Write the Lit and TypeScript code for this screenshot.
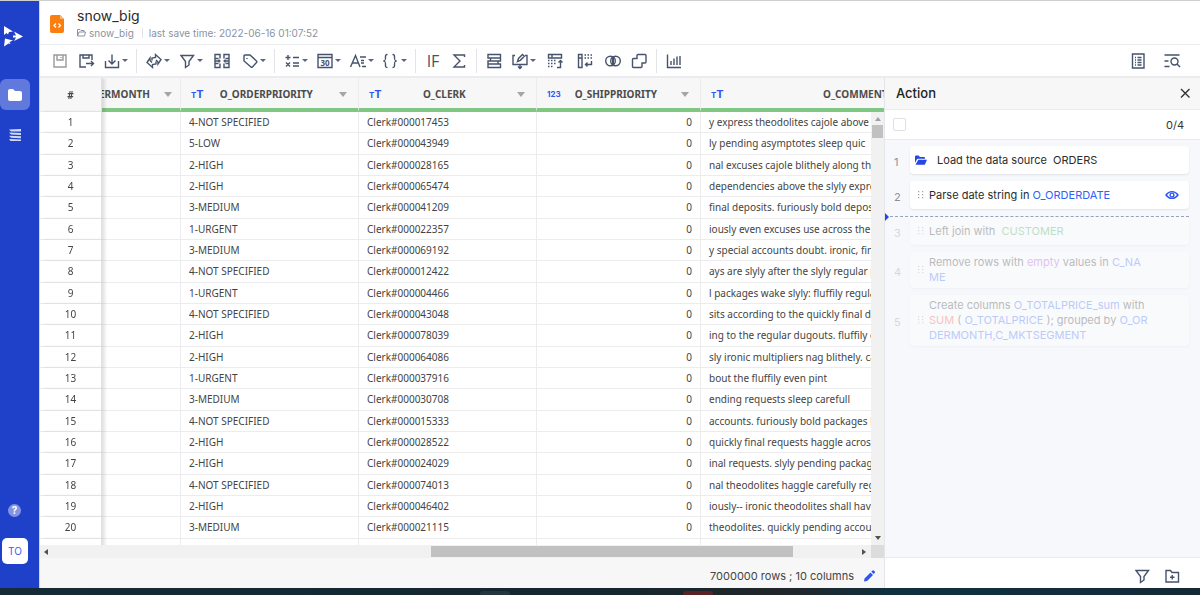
import { LitElement, html, svg, css, nothing } from "lit";
import { customElement, property } from "lit/decorators.js";
import { classMap } from "lit/directives/class-map.js";

const ICONS: Record<string, any> = {
  save: svg`<path d="M3 3h12v12H3z M6 3v5h6V3 M10 5v1"/>`,
  saveAs: svg`<path d="M15 8V3H3v12h6 M6 3v3h6V3 M9 11.500h7 M14 9l2.500 2.500L14 14"/>`,
  download: svg`<path d="M2.500 9v6.500h13V9 M9 2.500v9 M5.500 8.500L9 12l3.500-3.500"/>`,
  convert: svg`<path d="M7 8.500V6l3.500-.5V2.500L16 7.500 13 12v-2 M11 9.500V12l-3.500.5v3L2 10.500 5 6v2.500 M5 8.500l2 2 M13 10l-2-2"/>`,
  filter: svg`<path d="M3 3.500h12.500L11 9.500v3.500l-3.500 2.500v-6z"/>`,
  columns: svg`<path d="M7 6.500V2.500H2v13h5v-4 M2 6.500h3.500 M2 11.500h3.500 M11 6.500V2.500h5v13h-5v-4 M16 6.500h-3.500 M16 11.500h-3.500 M2 9h5.500 M10.500 9H16 M6 7.500v3 M12 7.500v3"/>`,
  tag: svg`<path d="M3 4q0-1 1-1h5l6.500 6q.8.700 0 1.500L11.500 15q-.8.700-1.500 0L3 9z M6 6v1"/>`,
  calc: svg`<path d="M2.500 5.500h5 M5 3v5 M10 5.500h6 M3 10.500l4 4 M7 10.500l-4 4 M10 11h6 M10 14h6"/>`,
  calendar: svg`<path d="M2 2.500h14v13H2z M2 5.500h14"/><text x="9" y="14" font-size="8" font-weight="700" text-anchor="middle">30</text>`,
  format: svg`<path d="M1.500 15L6.500 3.500 11 15 M3.500 11h6 M11 5h6 M12 8.500h3 M12 11h3 M13 14.500h4"/>`,
  braces: svg`<path d="M5.500 2.500c-2.500 0-2 1.500-2 3.500s0 2.500-2 3c2 .5 2 1 2 3s-.5 3.500 2 3.500 M10.500 2.500c2.500 0 2 1.500 2 3.500s0 2.500 2 3c-2 .5-2 1-2 3s.5 3.500-2 3.500"/>`,
  sigma: svg`<path d="M14.500 5V3H4l6 6-6 6h10.500v-2"/>`,
  union: svg`<path d="M3 2.500h12.500v3.500H3z M3 12h12.500v3.500H3z M5.500 6v3h7.500v3 M15.500 6v3h-2.500 M3 12V9h2.500"/>`,
  edit: svg`<path d="M4 3.500H2v9h14v-9h-2 M9 12.500V16 M7 14.500l2 2 2-2 M6.500 9.500l1-3 4-4 1.800 1.800-4 4z"/>`,
  pivot: svg`<path d="M2.500 2.500h13v3.500h-13z M6 2.500V6 M11 15.500h3.500V8.500 M12.500 10.500l2-2 2 2"/><path stroke-dasharray="1.500 1.500" d="M2 8.500h8 M2 11.500h8 M2 14.500h6"/>`,
  unpivot: svg`<path d="M2.500 2.500H6v13H2.500z M2.500 6H6 M15.500 9v3.500H9.500 M11.500 10.500l-2 2 2 2"/><path stroke-dasharray="1.500 1.500" d="M8.500 3h8 M8.500 6h8"/>`,
  join: svg`<circle cx="6.500" cy="9" r="4.800"/><circle cx="11.500" cy="9" r="4.800"/><path d="M9 5v8" stroke-width="2"/>`,
  copy: svg`<path d="M7 6.500v-3q0-1 1-1h7q1 0 1 1v6.500q0 1-1 1h-3v3.500q0 1-1 1H3.500q-1 0-1-1V7.500q0-1 1-1z"/>`,
  chart: svg`<path d="M2.500 2.500v13H16 M6 9v4 M9 6.500V13 M12 4.500V13 M15 4v9"/>`,
  report: svg`<path d="M3.500 2h11.500v14H3.500z M6 5.500h1 M8.500 5.500h4 M6 8h1 M8.500 8h4 M6 10.500h1 M8.500 10.500h4 M6 13h1 M8.500 13h4"/>`,
  search: svg`<path d="M1.500 3h15 M1.500 9h4 M1.500 14.500h5"/><circle cx="11.500" cy="9.500" r="3.500"/><path d="M14 12l3 3"/>`,
  folderPlus: svg`<path d="M3 3.500h4.500l1.500 2h6.500v9.500H3z M9.250 8v4.500 M7 10.250h4.500"/>`,
  close: svg`<path d="M5 5l8.500 8.500 M13.500 5L5 13.500"/>`,
  eye: svg`<path d="M3 9c3.200-4.500 8.800-4.500 12 0-3.200 4.500-8.800 4.500-12 0z"/><circle cx="9" cy="9" r="1.900"/>`,
};

const icon = (name: string) => html`<svg class="icon" viewBox="0 0 18 18" aria-hidden="true">${ICONS[name]}</svg>`;

type Tool = { id: string; label: string; menu?: boolean; wide?: boolean; off?: boolean };
const TOOLS: Tool[][] = [
  [{ id: "save", label: "Save", off: true }, { id: "saveAs", label: "Save as" }, { id: "download", label: "Export", menu: true }],
  [{ id: "convert", label: "Convert", menu: true }, { id: "filter", label: "Filter", menu: true }, { id: "columns", label: "Columns", wide: true }, { id: "tag", label: "Tag", menu: true }],
  [{ id: "calc", label: "Calculate", menu: true }, { id: "calendar", label: "Date", menu: true }, { id: "format", label: "Text", menu: true }, { id: "braces", label: "Objects", menu: true }],
  [{ id: "if", label: "Condition" }, { id: "sigma", label: "Aggregate" }],
  [{ id: "union", label: "Union" }, { id: "edit", label: "Edit", menu: true }, { id: "pivot", label: "Pivot", wide: true }, { id: "unpivot", label: "Unpivot", wide: true }, { id: "join", label: "Join" }, { id: "copy", label: "Duplicates" }],
  [{ id: "chart", label: "Chart" }],
];

const ROWS: [string, string, string][] = [
  ["4-NOT SPECIFIED", "000017453", "y express theodolites cajole above the"],
  ["5-LOW", "000043949", "ly pending asymptotes sleep quic"],
  ["2-HIGH", "000028165", "nal excuses cajole blithely along the f"],
  ["2-HIGH", "000065474", "dependencies above the slyly express"],
  ["3-MEDIUM", "000041209", "final deposits. furiously bold deposits"],
  ["1-URGENT", "000022357", "iously even excuses use across the reg"],
  ["3-MEDIUM", "000069192", "y special accounts doubt. ironic, final"],
  ["4-NOT SPECIFIED", "000012422", "ays are slyly after the slyly regular pla"],
  ["1-URGENT", "000004466", "l packages wake slyly: fluffily regular"],
  ["4-NOT SPECIFIED", "000043048", "sits according to the quickly final dep"],
  ["2-HIGH", "000078039", "ing to the regular dugouts. fluffily eve"],
  ["2-HIGH", "000064086", "sly ironic multipliers nag blithely. caref"],
  ["1-URGENT", "000037916", "bout the fluffily even pint"],
  ["3-MEDIUM", "000030708", "ending requests sleep carefull"],
  ["4-NOT SPECIFIED", "000015333", "accounts. furiously bold packages hag"],
  ["2-HIGH", "000028522", "quickly final requests haggle across t"],
  ["2-HIGH", "000024029", "inal requests. slyly pending packages"],
  ["4-NOT SPECIFIED", "000074013", "nal theodolites haggle carefully regul"],
  ["2-HIGH", "000046402", "iously-- ironic theodolites shall have"],
  ["3-MEDIUM", "000021115", "theodolites. quickly pending accounts"],
  ["2-HIGH", "000023841", "ns sleep about the slyly final bold th"],
];

const base = css`
  *, :host { box-sizing: border-box; }
  button { border: 0; background: none; padding: 0; font: inherit; color: inherit; cursor: pointer; }
  .icon { display: block; width: 18px; height: 18px; fill: none; stroke: currentColor; stroke-width: 1.4; flex: none; }
  .icon text { fill: currentColor; stroke: none; }
`;

@customElement("side-nav")
export class SideNav extends LitElement {
  static styles = [base, css`
    :host { display: flex; flex-direction: column; width: 40px; background: #1f40c8; border-right: 1px solid #ced6f4; }
    .logo { display: block; margin: 23px 0 31px 3px; width: 22px; height: 24px; fill: #fff; }
    .tab { display: flex; align-items: center; justify-content: center; width: 30px; height: 31px; margin-bottom: 9px; }
    .tab svg { width: 16px; height: 16px; fill: #fff; }
    .active { background: #6179dc; border-radius: 6px; }
    .space { flex: 1; }
    .help { width: 13px; height: 13px; margin: 0 0 21px 8px; border-radius: 50%; background: #8395e2; color: #fff; font: 700 10px/13px Inter, sans-serif; }
    .avatar { width: 26px; height: 26px; margin: 0 0 24px 2px; border-radius: 5px; background: #fff; color: #3c5cf0; font: 10px/26px Inter, sans-serif; }
  `];
  render() {
    return html`
      <svg class="logo" viewBox="0 0 22 24" role="img" aria-label="Home">
        <path d="M1 2l9 5.500-4 .5-1 2.500-1.500-1.500L1 11z M11 7.500l9 5-9 4.500 2-3.500h-3v-2h3z M1 22.500l1-8 8 2-3.500 1.500 1 2-2-.5z"/>
      </svg>
      <button class="tab active" aria-label="Projects">
        <svg viewBox="0 0 16 16"><path d="M1 4q0-2 2-2h3l2 2h5q2 0 2 2v6q0 2-2 2H3q-2 0-2-2z"/></svg>
      </button>
      <button class="tab" aria-label="Data sources">
        <svg viewBox="0 0 16 16" fill-opacity=".8"><path d="M2 2.500l12-.5v2.500H4z M2 5.500L14 6v2L4 7.500z M2 8.800l12 .5v2l-10-.5z M2 12l12 .5V14H3.500z"/></svg>
      </button>
      <div class="space"></div>
      <button class="help" aria-label="Help">?</button>
      <button class="avatar">TO</button>
    `;
  }
}

@customElement("tool-bar")
export class ToolBar extends LitElement {
  static styles = [base, css`
    :host { display: flex; align-items: center; gap: 8px; height: 34px; padding: 0 19px 0 11px; background: #fff; color: #46536b;
      border-top: 1px solid #ececf0; border-bottom: 2px solid #ececf0; font-family: "Open Sans", sans-serif; }
    button { display: flex; align-items: center; }
    .wide { width: 22px; justify-content: center; }
    .off { color: #9a9a9a; }
    .menu::after { content: ""; margin-left: 1px; border: 3px solid transparent; border-top-color: #5b6480; border-bottom: 0; }
    .sep { width: 1px; height: 24px; background: #e3e4e8; }
    .if { width: 18px; font-size: 16px; line-height: 18px; text-align: center; }
    .space { flex: 1; }
    .end { margin-left: 8px; }
  `];
  render() {
    return html`
      ${TOOLS.map((group, i) => html`
        ${i ? html`<span class="sep"></span>` : nothing}
        ${group.map((t) => html`<button class=${classMap({ menu: !!t.menu, wide: !!t.wide, off: !!t.off })} aria-label=${t.label}>
          ${t.id === "if" ? html`<span class="if">IF</span>` : icon(t.id)}</button>`)}
      `)}
      <span class="space"></span>
      <button aria-label="Report">${icon("report")}</button>
      <button class="end" aria-label="Search actions">${icon("search")}</button>
    `;
  }
}

@customElement("data-grid")
export class DataGrid extends LitElement {
  static styles = [base, css`
    :host { display: flex; flex-direction: column; flex: 1; min-width: 0; background: #f7f7f7; color: #444; font-family: "Noto Sans", sans-serif; }
    .view { position: relative; flex: 1 1 0; min-height: 0; overflow: hidden; background: #fff; }
    table { width: 100%; min-width: 977px; height: 482px; table-layout: fixed; border-collapse: separate; border-spacing: 0; font-size: 10px; line-height: 14px; }
    th, td { padding: 0 8px; border-right: 1px solid #ececee; border-bottom: 1px solid #ececee; white-space: nowrap; overflow: hidden; text-align: left; font-weight: 400; }
    thead th { height: 34px; padding: 2px 11px 0 10px; background: #f7f7f7; border-bottom: 4px solid #80c784; font-weight: 700; color: #4c4c4c; }
    .idx { position: sticky; left: 0; z-index: 1; padding: 0 6px; background: #fff; text-align: center; overflow: visible; border-right-color: #e0e0e0; box-shadow: 3px 0 3px #0000001c; }
    thead .idx { padding: 0 6px; background: #f7f7f7; border-bottom: 1px solid #ececee; }
    .num { text-align: right; }
    .c-idx { width: 62px; } .c-month { width: 79px; } .c-text { width: 178px; } .c-num { width: 164px; }
    .head { display: flex; align-items: center; }
    .name { flex: 1; margin-right: 10px; text-align: center; }
    .cut { justify-content: flex-end; margin: 0 -3px 0 -10px; overflow: hidden; }
    .cut .name { flex: none; margin-right: 14px; }
    .type { color: #2f55f0; font: 700 11px/12px Inter, sans-serif; }
    .type small { font-size: 8px; }
    .type.digits { font-size: 8px; }
    .sort { border: 4px solid transparent; border-top: 5px solid #a5a5a5; border-bottom: 0; }
    .vbar { position: absolute; top: 34px; right: 0; bottom: 0; z-index: 2; width: 13px; padding: 5px 1px; display: flex; flex-direction: column; align-items: center; background: #f1f1f1; }
    .vbar i { width: 11px; height: 13px; margin-top: 4px; background: #c1c1c1; }
    .up, .down { border: 3px solid transparent; }
    .up { border-top: 0; border-bottom: 4px solid #a0a0a0; }
    .down { margin-top: auto; border-bottom: 0; border-top: 4px solid #505050; }
    .hbar { display: flex; align-items: center; height: 13px; padding-left: 4px; background: #f1f1f1; }
    .left, .right { border: 3px solid transparent; }
    .left { border-left: 0; border-right: 4px solid #505050; }
    .right { border-right: 0; border-left: 4px solid #505050; margin-right: 5px; }
    .track { flex: 1; margin: 0 5px; }
    .thumb { display: block; width: 45%; height: 11px; margin-left: 47%; background: #c1c1c1; }
    .corner { width: 13px; height: 13px; background: #dcdcdc; }
    .foot { display: flex; align-items: center; justify-content: flex-end; gap: 8px; height: 30px; padding: 6px 8px 0 0; color: #444; font: 11px/18px Inter, sans-serif; }
    .pencil { color: #2f55f0; }
    .pencil svg { display: block; width: 14px; height: 14px; fill: currentColor; }
  `];
  private head(name: string, type = "text") {
    return html`<th scope="col"><div class="head">
      ${type === "text" ? html`<span class="type"><small>T</small>T</span>` : html`<span class="type digits">123</span>`}
      <span class="name">${name}</span><span class="sort"></span></div></th>`;
  }
  render() {
    return html`
      <div class="view">
        <table>
          <colgroup><col class="c-idx"><col class="c-month"><col class="c-text"><col class="c-text"><col class="c-num"><col></colgroup>
          <thead><tr>
            <th class="idx" scope="col">#</th>
            <th scope="col"><div class="head cut"><span class="name">O_ORDERMONTH</span><span class="sort"></span></div></th>
            ${this.head("O_ORDERPRIORITY")}${this.head("O_CLERK")}${this.head("O_SHIPPRIORITY", "number")}${this.head("O_COMMENT")}
          </tr></thead>
          <tbody>${ROWS.map(([priority, clerk, comment], i) => html`<tr>
            <th class="idx" scope="row">${i + 1}</th><td></td><td>${priority}</td><td>Clerk#${clerk}</td><td class="num">0</td><td>${comment}</td>
          </tr>`)}</tbody>
        </table>
        <div class="vbar" aria-hidden="true"><span class="up"></span><i></i><span class="down"></span></div>
      </div>
      <div class="hbar" aria-hidden="true"><span class="left"></span><span class="track"><span class="thumb"></span></span><span class="right"></span><span class="corner"></span></div>
      <div class="foot"><span>7000000 rows ; 10 columns</span>
        <button class="pencil" aria-label="Edit sample"><svg viewBox="0 0 14 14"><path d="M2 12.500l.5-3 6-6 2.500 2.500-6 6z M9.300 2.700L10.500 1.500q.7-.5 1.300 0l1 1q.5.700 0 1.300L11.600 5z"/></svg></button>
      </div>
    `;
  }
}

@customElement("action-step")
export class ActionStep extends LitElement {
  @property({ type: Number }) index = 1;
  @property({ type: Boolean, reflect: true }) pending = false;
  @property({ type: Boolean }) source = false;
  @property({ type: Boolean }) preview = false;
  static styles = [base, css`
    :host { display: flex; align-items: center; font: 11px/15px Inter, sans-serif; color: #2b2b2b; }
    :host([pending]) { opacity: .3; }
    .no { width: 25px; padding: 4px 0 0 9px; color: #8a8f9c; }
    .card { display: flex; align-items: center; flex: 1; min-height: 28px; padding: 3px 8px 3px 7px; border-radius: 4px; background: #fff; box-shadow: 0 1px 2px #00000018; }
    .grip { width: 12px; height: 11px; fill: #a0a5b0; }
    .folder { width: 13px; height: 12px; margin: 0 7px 0 -3px; fill: #2447e8; }
    .text { flex: 1; white-space: nowrap; }
    .source { padding-left: 3px; }
    .eye { color: #2f55f0; }
  `];
  render() {
    return html`
      <span class="no">${this.index}</span>
      <div class="card">
        ${this.source
          ? html`<svg class="folder" viewBox="0 0 13 12" aria-hidden="true"><path d="M1 9V2.500Q1 1.500 2 1.500h2.500L6 3h4q1 0 1 1v.7H4q-.8 0-1.200.8z M4.300 5.700H13l-2 4.500q-.3.500-1 .5H1.500z"/></svg>`
          : html`<svg class="grip" viewBox="0 0 12 11" aria-hidden="true">${[1, 4, 7].map((y) => svg`<path d="M1 ${y}h1.300v1.300H1z M5 ${y}h1.300v1.300H5z"/>`)}</svg>`}
        <span class=${classMap({ text: true, source: this.source })}><slot></slot></span>
        ${this.preview ? html`<button class="eye" aria-label="Preview">${icon("eye")}</button>` : nothing}
      </div>
    `;
  }
}

@customElement("action-panel")
export class ActionPanel extends LitElement {
  static styles = [base, css`
    :host { display: flex; flex-direction: column; width: 316px; border-left: 1px solid #e4e5ea; background: #f7f8fb; color: #333; font-family: Inter, sans-serif; }
    .title { display: flex; align-items: center; justify-content: space-between; height: 32px; padding: 0 6px 2px 11px; background: #f7f7f7; border-bottom: 1px solid #e9e9ee; }
    h2 { margin: 0; font-size: 13px; line-height: 18px; font-weight: 500; color: #222; }
    .pick { display: flex; align-items: center; justify-content: space-between; height: 30px; padding: 0 16px 0 8px; background: #fff; border-bottom: 1px solid #e9e9ee; font-size: 11px; line-height: 18px; }
    input { appearance: none; width: 13px; height: 13px; margin: 0; border: 1px solid #dfe0e4; border-radius: 2px; background: #fff; }
    .steps { display: flex; flex-direction: column; gap: 7px; flex: 1; padding: 6px 11px 0 0; }
    .mark { position: relative; height: 0; margin-bottom: -7px; border-top: 1px dashed #9aa2b8; }
    .mark::before { content: ""; position: absolute; left: 0; top: -4px; border: 4px solid transparent; border-left-color: #2447e8; border-right: 0; }
    .blue { color: #2f62f6; } .green { color: #2fa84f; } .violet { color: #a63fe0; } .red { color: #f0483c; }
    .bottom { display: flex; align-items: center; justify-content: flex-end; gap: 12px; height: 31px; padding: 6px 19px 0 0; background: #fff; border-top: 1px solid #ececf0; color: #46536b; }
  `];
  render() {
    return html`
      <div class="title"><h2>Action</h2><button aria-label="Close">${icon("close")}</button></div>
      <div class="pick"><input type="checkbox" aria-label="Select all actions"><span>0/4</span></div>
      <div class="steps">
        <action-step index="1" source>Load the data source &nbsp;ORDERS</action-step>
        <action-step index="2" preview>Parse date string in <span class="blue">O_ORDERDATE</span></action-step>
        <div class="mark"></div>
        <action-step index="3" pending>Left join with &nbsp;<span class="green">CUSTOMER</span></action-step>
        <action-step index="4" pending>Remove rows with <span class="violet">empty</span> values in <span class="blue">C_NA<br>ME</span></action-step>
        <action-step index="5" pending>Create columns <span class="blue">O_TOTALPRICE_sum</span> with<br><span class="red">SUM</span> ( <span class="blue">O_TOTALPRICE</span> ); grouped by <span class="blue">O_OR<br>DERMONTH,C_MKTSEGMENT</span></action-step>
      </div>
      <div class="bottom"><button aria-label="Filter actions">${icon("filter")}</button><button aria-label="New group">${icon("folderPlus")}</button></div>
    `;
  }
}

@customElement("app-root")
export class AppRoot extends LitElement {
  static styles = [base, css`
    :host { display: flex; flex-direction: column; height: 100vh; border-top: 1px solid #cfcfcf; background: #fff; font-family: Inter, sans-serif; }
    .app { display: flex; flex: 1; min-height: 0; }
    .page { display: flex; flex-direction: column; flex: 1; min-width: 0; }
    .header { display: flex; align-items: center; gap: 13px; height: 43px; padding: 2px 0 0 10px; }
    .file { width: 14px; height: 18px; }
    h1 { margin: 0; font-size: 14px; line-height: 18px; font-weight: 400; color: #2b2b2b; }
    .meta { display: flex; align-items: center; font-size: 10px; line-height: 16px; color: #8b93a3; }
    .meta a { display: flex; align-items: center; gap: 3px; color: inherit; text-decoration: none; }
    .meta svg { width: 9px; height: 9px; fill: none; stroke: currentColor; }
    .meta time { margin-left: 8px; padding-left: 6px; border-left: 1px solid #e0e2e6; line-height: 10px; }
    .work { display: flex; flex: 1; min-height: 0; }
    .dock { display: flex; align-items: flex-end; height: 7px; padding-left: 40%; background: linear-gradient(90deg, #142c38, #14262f 50%, #22262a 65%, #10303f 75%, #142a36); }
    .dock span { width: 30px; height: 4px; border-radius: 3px 3px 0 0; background: #24363f; }
    .dock .hot { margin-left: 24%; background: #5a2224; }
  `];
  render() {
    return html`
      <div class="app">
        <side-nav></side-nav>
        <div class="page">
          <div class="header">
            <svg class="file" viewBox="0 0 14 18" aria-hidden="true"><path d="M2 0h8l4 4v12q0 2-2 2H2q-2 0-2-2V2q0-2 2-2z" fill="#fc7e0f"/><path d="M10 0v4h4z" fill="#ffb56b"/><path d="M6 8.500L4 10.500l2 2 M8.500 8.500l2 2-2 2" fill="none" stroke="#fff" stroke-width="1.200"/></svg>
            <div>
              <h1>snow_big</h1>
              <div class="meta"><a href="#"><svg viewBox="0 0 9 9" aria-hidden="true"><path d="M.5 8V1.500H3l1 1h3V4 M.5 8l1.500-4h6.500L7.500 8z"/></svg>snow_big</a><time>last save time: 2022-06-16 01:07:52</time></div>
            </div>
          </div>
          <tool-bar></tool-bar>
          <div class="work"><data-grid></data-grid><action-panel></action-panel></div>
        </div>
      </div>
      <div class="dock" aria-hidden="true"><span></span><span class="hot"></span></div>
    `;
  }
}
